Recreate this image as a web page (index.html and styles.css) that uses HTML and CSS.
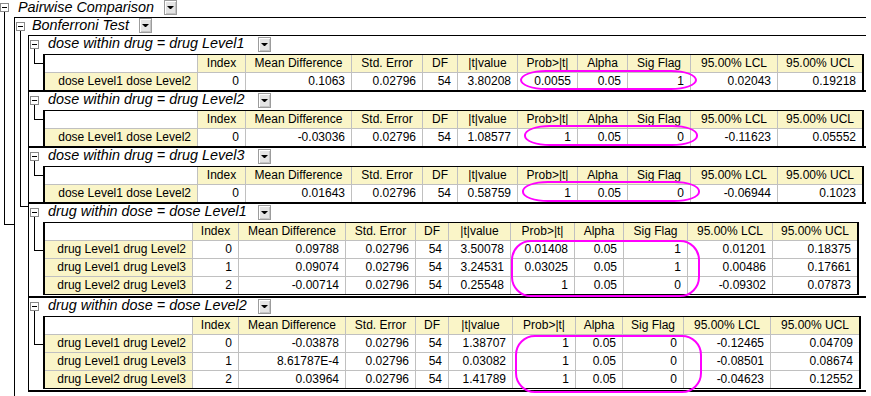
FILE: index.html
```html
<!DOCTYPE html>
<html lang="en">
<head>
    <meta charset="UTF-8">
    <title>Pairwise Comparison</title>
    <link rel="stylesheet" href="styles.css">
</head>
<body>
    <div class="tree">
        <div class="node lv0">
            <div class="head">
                <span class="tog"></span>
                <span class="title">Pairwise Comparison</span>
                <span class="dd"></span>
            </div>
            <div class="body">
                <div class="node lv1">
                    <div class="head">
                        <span class="tog"></span>
                        <span class="title">Bonferroni Test</span>
                        <span class="dd"></span>
                    </div>
                    <div class="body">

                        <!-- dose within drug -->
                        <div class="sect">
                            <div class="head">
                                <span class="tog"></span>
                                <span class="title">dose within drug = drug Level1</span>
                                <span class="dd"></span>
                            </div>
                            <div class="grid ga">
                                <div></div><div>Index</div><div>Mean Difference</div><div>Std. Error</div><div>DF</div><div>|t|value</div><div>Prob&gt;|t|</div><div>Alpha</div><div>Sig Flag</div><div>95.00% LCL</div><div>95.00% UCL</div>
                                <div>dose Level1 dose Level2</div><div>0</div><div>0.1063</div><div>0.02796</div><div>54</div><div>3.80208</div><div>0.0055</div><div>0.05</div><div>1</div><div>0.02043</div><div>0.19218</div>
                                <span class="mark m1"></span>
                            </div>
                        </div>

                        <div class="sect">
                            <div class="head">
                                <span class="tog"></span>
                                <span class="title">dose within drug = drug Level2</span>
                                <span class="dd"></span>
                            </div>
                            <div class="grid ga">
                                <div></div><div>Index</div><div>Mean Difference</div><div>Std. Error</div><div>DF</div><div>|t|value</div><div>Prob&gt;|t|</div><div>Alpha</div><div>Sig Flag</div><div>95.00% LCL</div><div>95.00% UCL</div>
                                <div>dose Level1 dose Level2</div><div>0</div><div>-0.03036</div><div>0.02796</div><div>54</div><div>1.08577</div><div>1</div><div>0.05</div><div>0</div><div>-0.11623</div><div>0.05552</div>
                                <span class="mark m2"></span>
                            </div>
                        </div>

                        <div class="sect">
                            <div class="head">
                                <span class="tog"></span>
                                <span class="title">dose within drug = drug Level3</span>
                                <span class="dd"></span>
                            </div>
                            <div class="grid ga">
                                <div></div><div>Index</div><div>Mean Difference</div><div>Std. Error</div><div>DF</div><div>|t|value</div><div>Prob&gt;|t|</div><div>Alpha</div><div>Sig Flag</div><div>95.00% LCL</div><div>95.00% UCL</div>
                                <div>dose Level1 dose Level2</div><div>0</div><div>0.01643</div><div>0.02796</div><div>54</div><div>0.58759</div><div>1</div><div>0.05</div><div>0</div><div>-0.06944</div><div>0.1023</div>
                                <span class="mark m3"></span>
                            </div>
                        </div>

                        <!-- drug within dose -->
                        <div class="sect">
                            <div class="head">
                                <span class="tog"></span>
                                <span class="title">drug within dose = dose Level1</span>
                                <span class="dd"></span>
                            </div>
                            <div class="grid gb">
                                <div></div><div>Index</div><div>Mean Difference</div><div>Std. Error</div><div>DF</div><div>|t|value</div><div>Prob&gt;|t|</div><div>Alpha</div><div>Sig Flag</div><div>95.00% LCL</div><div>95.00% UCL</div>
                                <div>drug Level1 drug Level2</div><div>0</div><div>0.09788</div><div>0.02796</div><div>54</div><div>3.50078</div><div>0.01408</div><div>0.05</div><div>1</div><div>0.01201</div><div>0.18375</div>
                                <div>drug Level1 drug Level3</div><div>1</div><div>0.09074</div><div>0.02796</div><div>54</div><div>3.24531</div><div>0.03025</div><div>0.05</div><div>1</div><div>0.00486</div><div>0.17661</div>
                                <div>drug Level2 drug Level3</div><div>2</div><div>-0.00714</div><div>0.02796</div><div>54</div><div>0.25548</div><div>1</div><div>0.05</div><div>0</div><div>-0.09302</div><div>0.07873</div>
                                <span class="mark m4"></span>
                            </div>
                        </div>

                        <div class="sect">
                            <div class="head">
                                <span class="tog"></span>
                                <span class="title">drug within dose = dose Level2</span>
                                <span class="dd"></span>
                            </div>
                            <div class="grid gc">
                                <div></div><div>Index</div><div>Mean Difference</div><div>Std. Error</div><div>DF</div><div>|t|value</div><div>Prob&gt;|t|</div><div>Alpha</div><div>Sig Flag</div><div>95.00% LCL</div><div>95.00% UCL</div>
                                <div>drug Level1 drug Level2</div><div>0</div><div>-0.03878</div><div>0.02796</div><div>54</div><div>1.38707</div><div>1</div><div>0.05</div><div>0</div><div>-0.12465</div><div>0.04709</div>
                                <div>drug Level1 drug Level3</div><div>1</div><div>8.61787E-4</div><div>0.02796</div><div>54</div><div>0.03082</div><div>1</div><div>0.05</div><div>0</div><div>-0.08501</div><div>0.08674</div>
                                <div>drug Level2 drug Level3</div><div>2</div><div>0.03964</div><div>0.02796</div><div>54</div><div>1.41789</div><div>1</div><div>0.05</div><div>0</div><div>-0.04623</div><div>0.12552</div>
                                <span class="mark m5"></span>
                            </div>
                        </div>

                    </div>
                </div>
            </div>
        </div>
    </div>
</body>
</html>
```

FILE: styles.css
```css
html, body {
    margin: 0;
    overflow: hidden;
    background: #fff;
}

body {
    font-family: "Liberation Sans", Arial, sans-serif;
    color: #000;
}

.tree {
    width: 866px;
}

.node {
    position: relative;
}

/* Section headers: toggle box, italic title, dropdown button */
.head {
    display: flex;
    align-items: flex-start;
    height: 17px;
}

.tog {
    flex: none;
    position: relative;
    width: 9px;
    height: 9px;
    box-sizing: border-box;
    border: 1px solid #8a8a8a;
    background: #fff;
    margin-top: 4px;
    margin-left: 1px;
}

.tog::after {
    content: "";
    position: absolute;
    left: 1px;
    top: 3px;
    width: 5px;
    height: 1px;
    background: #000;
}

.title {
    font-style: italic;
    font-size: 14.4px;
    line-height: 15px;
    white-space: nowrap;
    margin-left: 9px;
}

.dd {
    flex: none;
    position: relative;
    width: 13px;
    height: 15px;
    box-sizing: border-box;
    border: 1px solid #9c9c9c;
    background: #e4e4e4;
    box-shadow: inset 1px 1px 0 #fff, inset -1px -1px 0 #c4c4c4;
    margin-left: 10px;
}

.dd::after {
    content: "";
    position: absolute;
    left: 2px;
    top: 5px;
    width: 1px;
    border-left: 3px solid transparent;
    border-right: 3px solid transparent;
    border-top: 3px solid #000;
}

/* Tree levels */
.lv0 > .head .tog {
    margin-top: 3px;
    margin-left: 0;
}

.lv0::before,
.lv1::before,
.sect::before {
    content: "";
    position: absolute;
    box-sizing: border-box;
    border-left: 1px solid #000;
    border-bottom: 1px solid #000;
}

.lv0::before {
    left: 4px;
    top: 12px;
    width: 10px;
    height: 213px;
}

.lv0 > .body {
    margin-left: 14px;
    border-top: 1px solid #000;
    border-left: 1px solid #000;
    padding-bottom: 20px;
}

.lv1::before {
    left: 5px;
    top: 12px;
    width: 8px;
    height: 177px;
}

.lv1 > .head .title {
    margin-left: 7px;
}

.lv1 > .body {
    margin-left: 13px;
    border-top: 1px solid #000;
    border-left: 1px solid #000;
}

.sect {
    position: relative;
    border-bottom: 2px solid #000;
}

.sect::before {
    left: 5px;
    top: 12px;
    width: 9px;
    bottom: calc(50% - 1px);
}

.sect > .head {
    height: 18px;
}

.sect > .head .title {
    width: 200px;
}

.sect > .head .dd {
    margin-top: 1px;
}

/* Result tables */
.grid {
    position: relative;
    display: grid;
    gap: 1px;
    background: #c0c0c0;
    margin-left: 14px;
    width: max-content;
    border: 2px solid #000;
    border-top-width: 1px;
    border-bottom: 0;
    font-size: 12px;
}

.ga {
    grid-template-columns: 152px 47px 105px 70px 34px 59px 59px 49px 62px 86px 84px;
}

.gb {
    grid-template-columns: 147px 45px 106px 69px 32px 61px 63px 48px 63px 84px 84px;
}

.gc {
    grid-template-columns: 147px 45px 106px 69px 32px 63px 62px 46px 60px 86px 88px;
}

.gb, .gc {
    border-bottom: 1px solid #000;
    margin-bottom: 1px;
}

.grid > div {
    height: 17px;
    line-height: 16px;
    background: #fff;
    text-align: right;
    padding-right: 6px;
    white-space: nowrap;
    overflow: hidden;
}

.grid > div:nth-child(-n+11) {
    background: #faf5c8;
    text-align: center;
    padding-right: 0;
}

.grid > div:nth-child(11n+1) {
    background: #faf5c8;
}

.grid > div:first-child {
    background: #fff;
}

/* Hand-drawn highlight rings */
.mark {
    position: absolute;
    box-sizing: border-box;
    border: 2px solid #ff00ff;
    pointer-events: none;
}

.m1 { left: 475px; top: 15px; width: 177px; height: 20px; border-radius: 26px / 10px; }
.m2 { left: 479px; top: 14px; width: 174px; height: 21px; border-radius: 26px / 10px; }
.m3 { left: 477px; top: 14px; width: 178px; height: 21px; border-radius: 26px / 10px; }
.m4 { left: 466px; top: 17px; width: 189px; height: 57px; border-radius: 20px; }
.m5 { left: 470px; top: 18px; width: 187px; height: 58px; border-radius: 20px; }
```
